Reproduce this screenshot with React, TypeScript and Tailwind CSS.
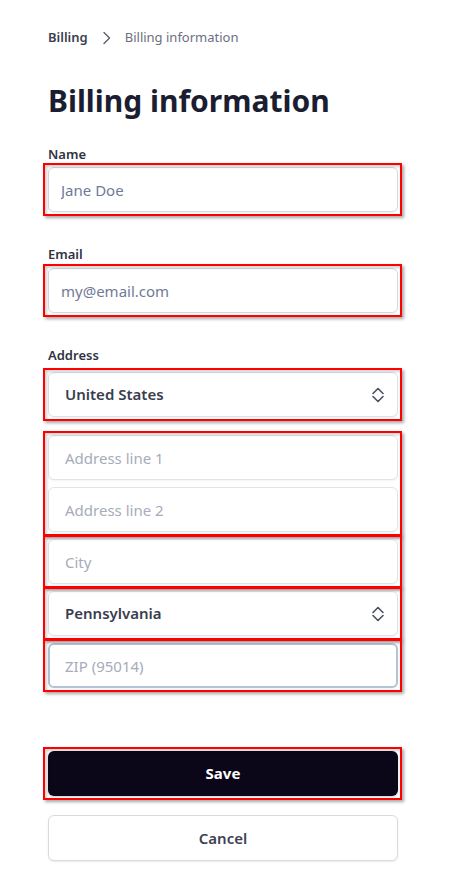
import React from "react";

const font = { fontFamily: '"Noto Sans", "Open Sans", Arial, sans-serif' };

function Mark() {
  return (
    <span
      aria-hidden
      className="pointer-events-none absolute -left-[5px] -top-[4px] -right-[4px] -bottom-[4px] border-2 border-[#ff0000] shadow-[2px_2px_3px_rgba(0,0,0,0.35),inset_2px_2px_3px_rgba(0,0,0,0.18)]"
    />
  );
}

function UpDown() {
  return (
    <svg width="14" height="18" viewBox="0 0 14 18" fill="none" stroke="#4b5061" strokeWidth="1.6" strokeLinecap="round" strokeLinejoin="round">
      <path d="M2 7.5 7 2.5 12 7.5" />
      <path d="M2 10.5 7 15.5 12 10.5" />
    </svg>
  );
}

function Select({ value }: { value: string }) {
  return (
    <div className="relative">
      <button
        type="button"
        className="flex h-[45px] w-full items-center justify-between rounded-md border border-[#dfe1e6] bg-white pl-4 pr-[12px] text-left text-[15px] font-semibold text-[#393d4f] shadow-[0_1px_2px_rgba(0,0,0,0.06)]"
      >
        <span>{value}</span>
        <UpDown />
      </button>
      <Mark />
    </div>
  );
}

function Field({ placeholder, strong, zip }: { placeholder: string; strong?: boolean; zip?: boolean }) {
  const tone = strong
    ? "border border-[#d3d9e2] px-3 placeholder:text-[#6f7a96]"
    : zip
      ? "border-2 border-[#b3c3d3] px-[15px] placeholder:text-[#a6acb9]"
      : "border border-[#e2e3e8] px-4 placeholder:text-[#a6acb9]";
  return (
    <input
      placeholder={placeholder}
      className={`block h-[45px] w-full rounded-md bg-white text-[15px] outline-none shadow-[0_1px_2px_rgba(0,0,0,0.05)] ${tone}`}
      style={font}
    />
  );
}

function Marked({ children }: { children: React.ReactNode }) {
  return (
    <div className="relative flex flex-col gap-[7px]">
      {children}
      <Mark />
    </div>
  );
}

function Label({ children }: { children: React.ReactNode }) {
  return <label className="block text-[13px] font-semibold leading-[18px] text-[#2f3344]">{children}</label>;
}

export default function App() {
  return (
    <div className="flex min-h-[896px] w-[454px] flex-col bg-white px-12 pt-7" style={font}>
      <nav className="flex h-5 items-center gap-[14px] text-[13px]">
        <span className="font-semibold text-[#3b3f51]">Billing</span>
        <svg width="9" height="14" viewBox="0 0 9 14" fill="none" stroke="#5b5f6e" strokeWidth="1.4" strokeLinecap="round" strokeLinejoin="round">
          <path d="M2 1.5 7.5 7 2 12.5" />
        </svg>
        <span className="text-[#6b7080]">Billing information</span>
      </nav>

      <h1 className="mt-[34px] text-[30px] font-bold leading-[38px] text-[#1b1e30]">Billing information</h1>

      <form className="mt-[25px] flex w-[350px] flex-col" onSubmit={(e) => e.preventDefault()}>
        <div className="flex flex-col gap-1">
          <Label>Name</Label>
          <Marked>
            <Field placeholder="Jane Doe" strong />
          </Marked>
        </div>

        <div className="mt-[33px] flex flex-col gap-[5px]">
          <Label>Email</Label>
          <Marked>
            <Field placeholder="my@email.com" strong />
          </Marked>
        </div>

        <div className="mt-[33px] flex flex-col gap-2">
          <Label>Address</Label>
          <div className="flex flex-col gap-[18px]">
            <Select value="United States" />
            <div className="flex flex-col gap-[7px]">
              <Marked>
                <Field placeholder="Address line 1" />
                <Field placeholder="Address line 2" />
              </Marked>
              <Marked>
                <Field placeholder="City" />
              </Marked>
              <Select value="Pennsylvania" />
              <Marked>
                <Field placeholder="ZIP (95014)" zip />
              </Marked>
            </div>
          </div>
        </div>

        <div className="mt-[63px] flex flex-col gap-[19px]">
          <Marked>
            <button
              type="submit"
              className="flex h-[45px] w-full items-center justify-center rounded-md bg-[#0c0619] text-[15px] font-bold text-white shadow-[0_1px_2px_rgba(0,0,0,0.2)]"
            >
              Save
            </button>
          </Marked>
          <button
            type="button"
            className="flex h-[46px] w-full items-center justify-center rounded-md border border-[#d9dade] bg-white text-[15px] font-semibold text-[#3d4153] shadow-[0_1px_2px_rgba(0,0,0,0.08)]"
          >
            Cancel
          </button>
        </div>
      </form>
    </div>
  );
}
